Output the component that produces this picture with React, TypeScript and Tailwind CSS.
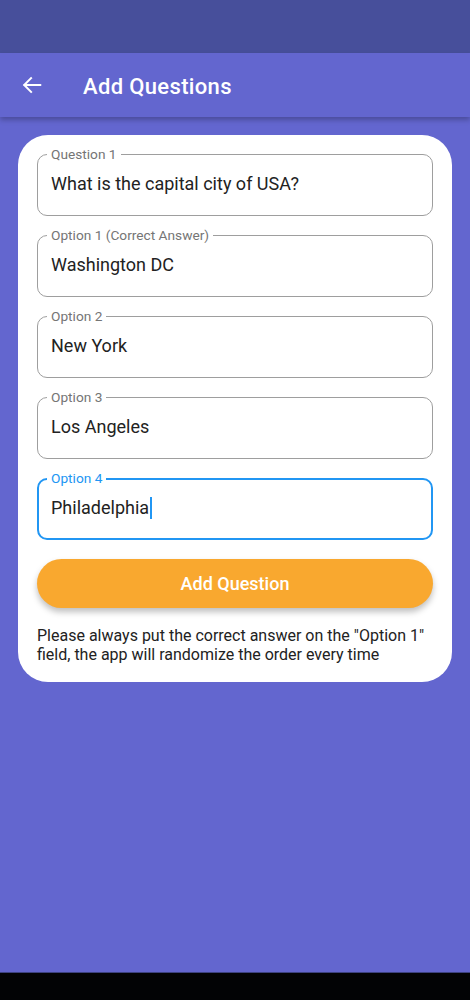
import React from "react";

type FieldProps = { label: string; value: string; focused?: boolean };

function Field({ label, value, focused }: FieldProps) {
  return (
    <div
      className={
        focused
          ? "relative h-[62px] rounded-[10px] border-2 border-[#2196f3] flex items-center pl-[12px]"
          : "relative h-[62px] rounded-[10px] border border-[#9e9e9e] flex items-center pl-[13px]"
      }
    >
      <span
        className={
          focused
            ? "absolute -top-[10px] left-[8px] bg-white px-[4px] text-[13.7px] leading-[16px] text-[#2196f3]"
            : "absolute -top-[9px] left-[9px] bg-white px-[4px] text-[13.7px] leading-[16px] text-[#757575]"
        }
      >
        {label}
      </span>
      <span className="text-[18px] leading-[24px] text-[#222222] -mt-[3px] flex items-center">
        {value}
        {focused && <span className="inline-block w-[2px] h-[22px] bg-[#2196f3] ml-[1px]" />}
      </span>
    </div>
  );
}

export default function App() {
  return (
    <div
      className="w-[470px] h-[1000px] flex flex-col bg-[#6366cf] overflow-hidden"
      style={{ fontFamily: "Roboto, 'Noto Sans', sans-serif" }}
    >
      <div className="h-[53px] bg-[#474f9b] shrink-0" />
      <div className="h-[64px] bg-[#6366cf] shrink-0 flex items-center shadow-[0_3px_5px_rgba(0,0,0,0.25)] relative z-10">
        <svg
          width="22"
          height="22"
          viewBox="0 0 24 24"
          className="ml-[21px]"
          fill="none"
          stroke="white"
          strokeWidth="2.2"
          strokeLinecap="square"
        >
          <path d="M21 12H4" />
          <path d="M11 4.5L3.5 12L11 19.5" />
        </svg>
        <span className="ml-[40px] mt-[2px] text-white text-[22px] font-medium tracking-[0.35px]">Add Questions</span>
      </div>
      <div className="flex-1 px-[18px] pt-[18px]">
        <div className="bg-white rounded-[30px] px-[19px] pt-[19px] pb-[18px] flex flex-col">
          <div className="flex flex-col gap-[19px]">
            <Field label="Question 1" value="What is the capital city of USA?" />
            <Field label="Option 1 (Correct Answer)" value="Washington DC" />
            <Field label="Option 2" value="New York" />
            <Field label="Option 3" value="Los Angeles" />
            <Field label="Option 4" value="Philadelphia" focused />
          </div>
          <button className="mt-[19px] h-[49px] rounded-full bg-[#f9a82f] text-white text-[18px] font-medium shadow-[0_4px_6px_rgba(0,0,0,0.25)]">
            Add Question
          </button>
          <p className="mt-[18px] text-[16px] leading-[19px] text-[#222222]">
            Please always put the correct answer on the "Option 1" field, the app will randomize the order every time
          </p>
        </div>
      </div>
      <div className="h-[28px] bg-[#020305] border-t border-[#3d4280] shrink-0" />
    </div>
  );
}
